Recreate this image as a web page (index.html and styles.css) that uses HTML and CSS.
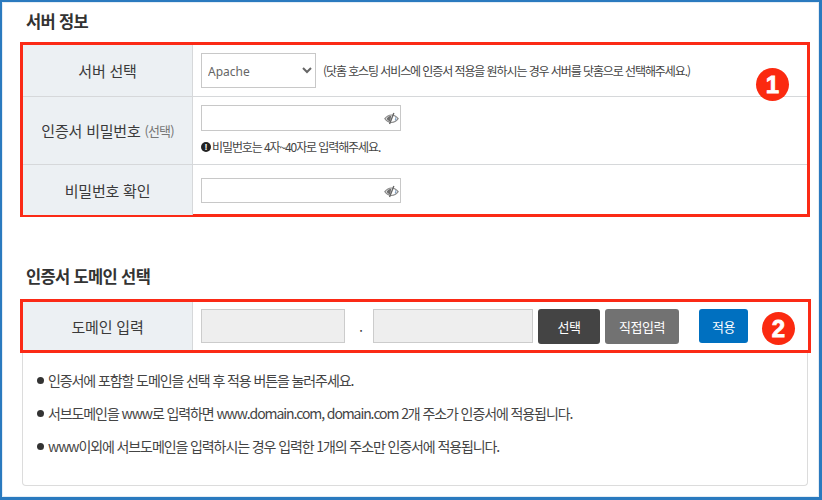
FILE: index.html
```html
<!DOCTYPE html>
<html lang="ko">
<head>
<meta charset="utf-8">
<title>서버 정보</title>
<link rel="stylesheet" href="styles.css">
</head>
<body>
<div class="frame">
  <h2 class="title first">서버 정보</h2>
  <div class="box box-server">
    <div class="row row-a">
      <div class="th">서버 선택</div>
      <div class="td td-inline">
        <select class="sel"><option>Apache</option></select>
        <span class="note">(닷홈 호스팅 서비스에 인증서 적용을 원하시는 경우 서버를 닷홈으로 선택해주세요.)</span>
      </div>
    </div>
    <div class="row row-b">
      <div class="th">인증서 비밀번호&nbsp;<span class="opt">(선택)</span></div>
      <div class="td td-stack">
        <div class="pw">
          <svg class="eye" viewBox="0 0 14 12"><path d="M.8 6.200C2.500 3.900 4.600 2.700 7 2.700s4.500 1.200 6.200 3.500C11.500 8.500 9.400 9.700 7 9.700S2.500 8.500.8 6.200z" fill="#fff" stroke="#8a8a8a" stroke-width="1.100"/><path d="M2.400 6.200C3.500 4.500 5 3.600 6.800 3.500L5.700 8.800C4.300 8.400 3.200 7.500 2.400 6.200z" fill="#6e6e6e"/><path d="M5.200 11.200 9.200.8" stroke="#666" stroke-width="1.300" fill="none"/><path d="M10.800 4.800c.5 1 .3 2-.5 2.900" stroke="#7f9fc0" stroke-width="1" fill="none"/></svg>
        </div>
        <div class="hint"><span class="ex">!</span>비밀번호는 4자~40자로 입력해주세요.</div>
      </div>
    </div>
    <div class="row row-c">
      <div class="th">비밀번호 확인</div>
      <div class="td td-inline">
        <div class="pw">
          <svg class="eye" viewBox="0 0 14 12"><path d="M.8 6.200C2.500 3.900 4.600 2.700 7 2.700s4.500 1.200 6.200 3.500C11.500 8.500 9.400 9.700 7 9.700S2.500 8.500.8 6.200z" fill="#fff" stroke="#8a8a8a" stroke-width="1.100"/><path d="M2.400 6.200C3.500 4.500 5 3.600 6.800 3.500L5.700 8.800C4.300 8.400 3.200 7.500 2.400 6.200z" fill="#6e6e6e"/><path d="M5.200 11.200 9.200.8" stroke="#666" stroke-width="1.300" fill="none"/><path d="M10.800 4.800c.5 1 .3 2-.5 2.900" stroke="#7f9fc0" stroke-width="1" fill="none"/></svg>
        </div>
      </div>
    </div>
    <span class="badge badge-1">1</span>
  </div>
  <h2 class="title second">인증서 도메인 선택</h2>
  <div class="box box-domain">
    <div class="row row-d">
      <div class="th">도메인 입력</div>
      <div class="td td-domain">
        <div class="field field-a"></div>
        <span class="dot">.</span>
        <div class="field field-b"></div>
        <span class="btn btn-dark">선택</span>
        <span class="btn btn-gray">직접입력</span>
        <span class="btn btn-blue">적용</span>
      </div>
    </div>
    <span class="badge badge-2">2</span>
  </div>
  <div class="info">
    <p class="line"><span class="bullet"></span>인증서에 포함할 도메인을 선택 후 적용 버튼을 눌러주세요.</p>
    <p class="line"><span class="bullet"></span>서브도메인을 www로 입력하면 www.domain.com, domain.com 2개 주소가 인증서에 적용됩니다.</p>
    <p class="line"><span class="bullet"></span>www이외에 서브도메인을 입력하시는 경우 입력한 1개의 주소만 인증서에 적용됩니다.</p>
  </div>
</div>
</body>
</html>
```
FILE: styles.css
```css
* { box-sizing: border-box; }
html, body { margin: 0; padding: 0; background: #fff; }
body {
  width: 822px;
  height: 500px;
  overflow: hidden;
  font-family: "Noto Sans CJK KR", "Noto Sans", sans-serif;
  color: #333;
}
.frame {
  width: 822px;
  height: 500px;
  border: solid #2a7abf;
  border-width: 2px 3px 3px 2px;
  padding: 0 0 0 18px;
  box-shadow: inset 0 0 0 1px #e4edf5;
}
.title {
  margin: 0;
  font-size: 16.5px;
  line-height: 24px;
  font-weight: 700;
  color: #333;
  letter-spacing: -0.65px;
  padding-left: 6px;
}
.title.first { padding-top: 7px; height: 40px; }
.title.second { margin-top: 45px; height: 37px; padding-top: 2px; }
.box {
  position: relative;
  border: 3px solid #fb2a16;
  width: 790px;
}
.box-server { height: 175px; }
.box-domain { height: 54px; width: 791px; }
.row { display: flex; border-bottom: 1px solid #d6d8da; }
.row-a { height: 52px; }
.row-b { height: 68px; }
.row-c { height: 50px; border-bottom: 0; }
.row-d { height: 48px; border-bottom: 0; }
.th {
  width: 170px;
  flex: none;
  background: #ecf0f3;
  border-right: 1px solid #d6d8da;
  display: flex;
  align-items: center;
  justify-content: center;
  font-size: 15px;
  color: #3a3a3a;
  letter-spacing: -0.2px;
  white-space: nowrap;
}
.opt { font-size: 13px; color: #777; letter-spacing: -0.9px; }
.td { flex: 1; padding-left: 8px; }
.td-inline { display: flex; align-items: center; }
.td-stack { padding-top: 8px; }
.sel {
  width: 115px;
  height: 35px;
  border: 1px solid #c8c8c8;
  background: #fff;
  border-radius: 0;
  padding: 2px 0 0 2px;
  font-family: "Noto Sans", sans-serif;
  font-size: 12px;
  color: #666;
}
.note {
  margin-left: 7px;
  font-size: 12px;
  letter-spacing: -1.09px;
  color: #444;
  white-space: nowrap;
}
.pw {
  position: relative;
  width: 200px;
  height: 26px;
  border: 1px solid #c8c8c8;
  background: #fff;
}
.row-c .pw { height: 25px; }
.eye { position: absolute; right: 1px; top: 6px; width: 15px; height: 13px; }
.hint {
  display: flex;
  align-items: center;
  margin-top: 6px;
  font-size: 12px;
  letter-spacing: -1.1px;
  color: #444;
  line-height: 20px;
}
.ex {
  width: 10px;
  height: 10px;
  border-radius: 50%;
  background: #222;
  color: #fff;
  font-family: "Liberation Sans", sans-serif;
  font-weight: 700;
  font-size: 9px;
  line-height: 10px;
  text-align: center;
  letter-spacing: 0;
  margin-right: 1px;
}
.td-domain { display: flex; align-items: center; padding-top: 0; }
.field {
  height: 34px;
  background: #eeeeee;
  border: 1px solid #cccccc;
}
.field-a { width: 144px; }
.field-b { width: 160px; }
.dot { width: 28px; padding: 2px 0 0 4px; text-align: center; font-size: 13px; line-height: 34px; color: #333; }
.btn {
  display: flex;
  align-items: center;
  justify-content: center;
  height: 35px;
  border-radius: 3px;
  color: #fff;
  font-size: 13px;
  letter-spacing: -0.5px;
}
.btn-dark { width: 62px; background: #444444; margin-left: 5px; }
.btn-gray { width: 74px; background: #727272; margin-left: 5px; }
.btn-blue { width: 49px; height: 34px; background: #0070c0; margin-left: 20px; }
.badge {
  position: absolute;
  width: 33px;
  height: 33px;
  border-radius: 50%;
  background: #fb2a10;
  color: #fff;
  font-family: "Liberation Sans", sans-serif;
  font-weight: 700;
  font-size: 24px;
  line-height: 33px;
  text-align: center;
  -webkit-text-stroke: 0.8px #fff;
}
.badge-1 { left: 733px; top: 23px; }
.badge-2 { left: 739px; top: 10px; }
.info {
  width: 786px;
  height: 133px;
  margin-left: 2px;
  border: 1px solid #dcdcdc;
  border-top: 0;
  border-radius: 0 0 4px 4px;
  padding: 17px 0 0 14px;
}
.line {
  display: flex;
  align-items: center;
  margin: 0 0 13px;
  height: 20px;
  font-size: 14px;
  letter-spacing: -1.1px;
  color: #444;
  white-space: nowrap;
}
.bullet {
  width: 7px;
  height: 7px;
  border-radius: 50%;
  background: #333;
  margin-right: 4px;
  flex: none;
}
```
